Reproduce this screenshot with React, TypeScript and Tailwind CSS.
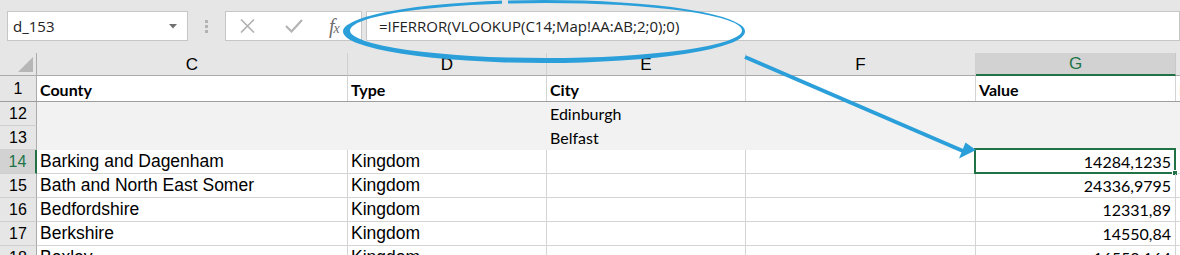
import React from "react";

const cols = ["C", "D", "E", "F", "G"];
const colW = ["w-[311px]", "w-[199px]", "w-[199px]", "w-[230px]", "w-[200px]"];

const rows = [
    { n: 12, c: "", d: "", e: "Edinburgh", g: "", fill: true },
    { n: 13, c: "", d: "", e: "Belfast", g: "", fill: true },
    { n: 14, c: "Barking and Dagenham", d: "Kingdom", e: "", g: "14284,1235", active: true },
    { n: 15, c: "Bath and North East Somer", d: "Kingdom", e: "", g: "24336,9795" },
    { n: 16, c: "Bedfordshire", d: "Kingdom", e: "", g: "12331,89" },
    { n: 17, c: "Berkshire", d: "Kingdom", e: "", g: "14550,84" },
    { n: 18, c: "Bexley", d: "Kingdom", e: "", g: "16552,164" },
];

function FormulaBar() {
    return (
        <div className="h-[53px] bg-[#e6e6e6] flex items-start pt-[11px]">
            <div className="ml-[7px] w-[181px] h-[30px] bg-white border border-[#c6c6c6] flex items-center justify-between pl-[5px] pr-[10px]">
                <span className="font-['Open_Sans',sans-serif] text-[15px] text-[#222] leading-none">d_153</span>
                <svg width="8" height="5" viewBox="0 0 8 5">
                    <path d="M0 0 L8 0 L4 4.5 Z" fill="#707070" />
                </svg>
            </div>
            <div className="w-[37px] h-[30px] flex flex-col items-center justify-center gap-[2px]">
                <span className="w-[3px] h-[3px] bg-[#b3b3b3]" />
                <span className="w-[3px] h-[3px] bg-[#b3b3b3]" />
                <span className="w-[3px] h-[3px] bg-[#b3b3b3]" />
            </div>
            <div className="w-[137px] h-[30px] bg-white border border-[#c6c6c6] flex items-center">
                <svg className="ml-[14px]" width="15" height="14" viewBox="0 0 15 14">
                    <path d="M1 0.5 L14 13.5 M14 0.5 L1 13.5" stroke="#b0b0b0" strokeWidth="1.6" />
                </svg>
                <svg className="ml-[30px]" width="18" height="14" viewBox="0 0 18 14">
                    <path d="M1 7 L6.5 12.5 L17 1" stroke="#b4b4b4" strokeWidth="2.2" fill="none" />
                </svg>
                <span className="ml-[26px] flex items-end text-[#6e6e6e] font-['Liberation_Serif',serif] italic leading-none">
                    <span className="text-[20px]">f</span>
                    <span className="text-[14px] -ml-[1px]">x</span>
                </span>
            </div>
            <div className="ml-[4px] flex-1 h-[30px] bg-white border border-[#c6c6c6] flex items-center pl-[12px]">
                <span className="font-['Open_Sans',sans-serif] text-[15px] text-[#222] leading-none">
                    =IFERROR(VLOOKUP(C14;Map!AA:AB;2;0);0)
                </span>
            </div>
        </div>
    );
}

function HeaderRow() {
    return (
        <div className="h-[23px] flex bg-[#e6e6e6] font-['Liberation_Sans',Arial,sans-serif] text-[17px] leading-none">
            <div className="w-[37px] h-full border-r border-b border-[#ababab] relative">
                <svg className="absolute left-[18px] top-[4px]" width="16" height="15" viewBox="0 0 16 15">
                    <path d="M15 0 L15 15 L0 15 Z" fill="#b6b6b6" />
                </svg>
            </div>
            {cols.map((c, i) =>
                c === "G" ? (
                    <div
                        key={c}
                        className={`${colW[i]} h-full bg-[#d2d2d2] border-r border-r-[#c8c8c8] border-b-2 border-b-[#217346] flex items-center justify-center text-[#217346]`}
                    >
                        {c}
                    </div>
                ) : (
                    <div
                        key={c}
                        className={`${colW[i]} h-full border-r border-r-[#d0d0d0] border-b border-b-[#ababab] flex items-center justify-center text-black`}
                    >
                        {c}
                    </div>
                )
            )}
            <div className="flex-1 h-full border-b border-[#ababab]" />
        </div>
    );
}

function TitleRow() {
    const cls = "h-full border-r border-[#d4d4d4] flex items-end pb-[3px] pl-[3px] font-['Lato',sans-serif] font-bold text-[16px] leading-none text-black";
    return (
        <div className="h-[26px] flex border-b border-[#9e9e9e]">
            <div className="w-[37px] h-full bg-[#e6e6e6] border-r border-[#ababab] flex items-center justify-center font-['Liberation_Sans',Arial,sans-serif] text-[16px] leading-none">
                1
            </div>
            <div className={`w-[311px] ${cls}`}>County</div>
            <div className={`w-[199px] ${cls}`}>Type</div>
            <div className={`w-[199px] ${cls}`}>City</div>
            <div className={`w-[230px] ${cls}`} />
            <div className={`w-[200px] ${cls}`}>Value</div>
            <div className="flex-1 h-full flex items-end pb-[3px] pl-[3px] overflow-hidden font-['Lato',sans-serif] font-bold text-[16px] leading-none">
                Population
            </div>
        </div>
    );
}

function DataRow({ r }: { r: (typeof rows)[number] }) {
    const grid = r.fill ? "bg-[#f2f2f2]" : "border-r border-b border-[#d4d4d4]";
    const arial = "font-['Liberation_Sans',Arial,sans-serif] text-[17.5px]";
    const lato = "font-['Lato',sans-serif] text-[16px]";
    return (
        <div className={`h-[24px] flex leading-none text-black ${r.fill ? "bg-[#f2f2f2]" : ""}`}>
            {r.active ? (
                <div className="w-[37px] h-full bg-[#d2d2d2] border-r-2 border-r-[#217346] border-b border-b-[#cfcfcf] flex items-center justify-center text-[#217346] font-['Liberation_Sans',Arial,sans-serif] text-[16px]">
                    {r.n}
                </div>
            ) : (
                <div className="w-[37px] h-full bg-[#e6e6e6] border-r border-r-[#ababab] border-b border-b-[#cfcfcf] flex items-center justify-center font-['Liberation_Sans',Arial,sans-serif] text-[16px]">
                    {r.n}
                </div>
            )}
            <div className={`w-[311px] h-full ${grid} flex items-center pl-[3px] whitespace-nowrap ${arial}`}>{r.c}</div>
            <div className={`w-[199px] h-full ${grid} flex items-center pl-[3px] whitespace-nowrap ${arial}`}>{r.d}</div>
            <div className={`w-[199px] h-full ${grid} flex items-center pl-[3px] whitespace-nowrap ${lato}`}>{r.e}</div>
            <div className={`w-[230px] h-full ${grid}`} />
            <div className={`w-[200px] h-full ${grid} relative flex items-center justify-end pr-[4px] ${lato}`}>
                {r.g}
                {r.active && (
                    <>
                        <span className="absolute -top-[2px] -left-[2px] -right-[1px] -bottom-[1px] border-2 border-[#217346]" />
                        <span className="absolute -right-[3px] -bottom-[3px] w-[6px] h-[6px] bg-[#217346] border border-white" />
                    </>
                )}
            </div>
            <div className={`flex-1 h-full ${r.fill ? "" : "border-b border-[#d4d4d4]"}`} />
        </div>
    );
}

function Annotation() {
    const outer = "M343 31.5 a201 31.5 0 1 0 402 0 a201 31.5 0 1 0 -402 0 Z";
    const inner = "M350 30.5 a196 27.5 0 1 0 392 0 a196 27.5 0 1 0 -392 0 Z";
    return (
        <svg className="absolute left-0 top-0 pointer-events-none" width="1180" height="255" viewBox="0 0 1180 255">
            <defs>
                <mask id="gap">
                    <rect x="0" y="0" width="1180" height="255" fill="white" />
                    <rect x="502" y="0" width="6" height="8" fill="black" />
                </mask>
            </defs>
            <path d={`${outer} ${inner}`} fill="#2b9fd9" fillRule="evenodd" mask="url(#gap)" />
            <line x1="745" y1="57" x2="963" y2="151" stroke="#2b9fd9" strokeWidth="4" />
            <polygon points="976,150 959,158.5 965.5,142.5" fill="#2b9fd9" />
        </svg>
    );
}

export default function App() {
    return (
        <div className="w-[1180px] h-[255px] overflow-hidden bg-white relative">
            <FormulaBar />
            <HeaderRow />
            <TitleRow />
            {rows.map((r) => (
                <DataRow key={r.n} r={r} />
            ))}
            <Annotation />
        </div>
    );
}
